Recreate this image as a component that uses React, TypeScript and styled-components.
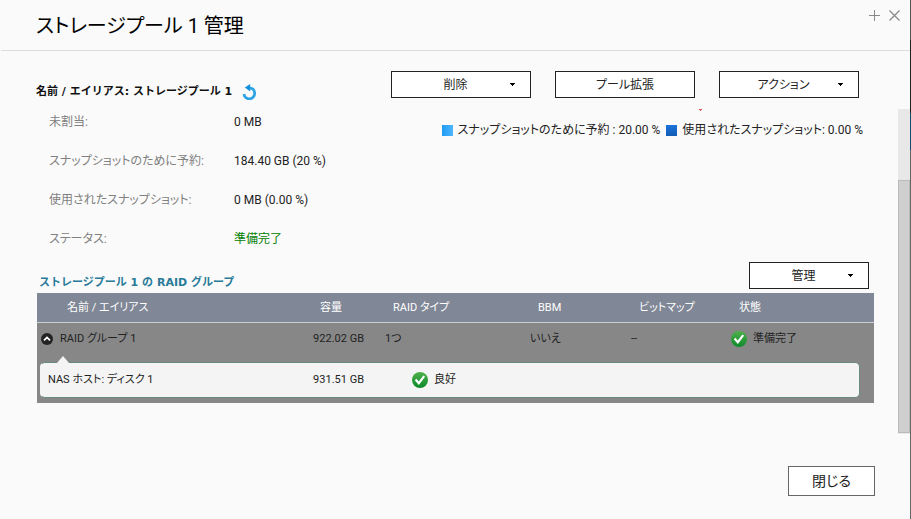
import React from "react";
import styled, { createGlobalStyle } from "styled-components";

const GlobalStyle = createGlobalStyle`
  * { box-sizing: border-box; }
  body {
    margin: 0;
    background: #fafafa;
    color: #222;
    font: 12px/16px Roboto, "Noto Sans CJK JP", sans-serif;
    font-feature-settings: "palt";
  }
  button { font: inherit; font-feature-settings: inherit; color: inherit; cursor: pointer; }
`;

const Screen = styled.div`
  display: flex;
  min-height: 100vh;
`;

const Dialog = styled.main`
  flex: 1;
  min-width: 0;
  display: flex;
  flex-direction: column;
`;

const Backdrop = styled.div`
  width: 1px;
  background: linear-gradient(#555 0 40px, #222 40px 113px, #0f5068 113px 150px, #666 150px);
`;

const TitleBar = styled.header`
  display: flex;
  justify-content: space-between;
  align-items: flex-start;
  height: 51px;
  margin-left: 1px;
  padding: 11px 9px 0 35px;
  border-bottom: 1px solid #ddd;
`;

const Title = styled.h1`
  margin: 0;
  font-size: 20px;
  line-height: 30px;
  font-weight: 400;
  color: #000;
`;

const WindowButtons = styled.div`
  display: flex;
  gap: 8px;
  margin-top: -1px;
`;

const IconButton = styled.button`
  display: flex;
  padding: 0;
  border: 0;
  background: none;
`;

const Toolbar = styled.div`
  display: flex;
  justify-content: space-between;
  align-items: flex-start;
  height: 58px;
  padding: 20px 51px 0 36px;
`;

const PoolName = styled.h2`
  display: flex;
  align-items: center;
  gap: 10px;
  margin: 0;
  padding-top: 13px;
  font: 700 11px/16px "DejaVu Sans", "Noto Sans CJK JP", sans-serif;
  color: #111;
`;

const Actions = styled.div`
  display: flex;
  gap: 24px;
`;

const Button = styled.button<{ $width: number }>`
  display: flex;
  align-items: center;
  gap: 4px;
  width: ${(p) => p.$width}px;
  height: 27px;
  padding: 0 14px;
  border: 1px solid #222;
  background: #fff;

  span { flex: 1; }
`;

const Viewport = styled.div`
  display: flex;
  justify-content: space-between;
`;

const Content = styled.div`
  flex: 1;
  min-width: 0;
  padding: 0 24px 31px 37px;
`;

const Scrollbar = styled.div`
  display: flex;
  flex-direction: column;
  width: 12px;
  padding: 71px 0 1px;
  background: #e8e8e8;
`;

const Thumb = styled.div`
  flex: 1;
  border: 1px solid #bbb;
  background: #cfcfcf;
`;

const Overview = styled.section`
  display: flex;
  justify-content: space-between;
  height: 153px;
  padding: 0 11px 0 12px;
`;

const Facts = styled.dl`
  display: grid;
  grid-template-columns: 185px auto;
  grid-auto-rows: 16px;
  row-gap: 23px;
  align-content: start;
  margin: 0;
  padding-top: 5px;
`;

const FactName = styled.dt`
  color: #808080;
`;

const FactValue = styled.dd<{ $good?: boolean }>`
  margin: 0;
  color: ${(p) => (p.$good ? "#008000" : "#222")};
`;

const ChartArea = styled.div`
  display: flex;
  flex-direction: column;
  align-items: flex-end;
`;

const Legend = styled.ul`
  display: flex;
  gap: 6px;
  margin: 11px 0 0;
  padding: 0;
  list-style: none;
`;

const LegendItem = styled.li<{ $from: string; $to: string; $angle: number }>`
  display: flex;
  align-items: center;
  gap: 5px;

  &::before {
    content: "";
    width: 11px;
    height: 11px;
    background: linear-gradient(${(p) => p.$angle}deg, ${(p) => p.$from}, ${(p) => p.$to});
  }
`;

const GroupBar = styled.div`
  display: flex;
  justify-content: space-between;
  align-items: flex-start;
  height: 31px;
  padding: 0 5px 0 2px;
`;

const GroupTitle = styled.h3`
  margin: 0;
  padding-top: 13px;
  font: 700 11px/16px "DejaVu Sans", "Noto Sans CJK JP", sans-serif;
  color: #287a98;
`;

const Table = styled.table`
  width: 100%;
  table-layout: fixed;
  border-collapse: separate;
  border-spacing: 0;
  background: #878787;
  font-size: 11px;
  line-height: 16px;
`;

const Column = styled.col<{ $width?: number }>`
  width: ${(p) => (p.$width ? `${p.$width}px` : "auto")};
`;

const HeadCell = styled.th<{ $indent?: number }>`
  height: 30px;
  padding: 0 0 0 ${(p) => p.$indent ?? 8}px;
  border-bottom: 1px solid #ccced2;
  background: #808796;
  color: #fff;
  font-weight: 400;
  text-align: left;
`;

const Cell = styled.td`
  height: 32px;
  padding: 0;
`;

const AmountCell = styled(Cell)`
  padding-right: 21px;
  text-align: right;
`;

const Inline = styled.div<{ $gap: number; $indent?: number }>`
  display: flex;
  align-items: center;
  gap: ${(p) => p.$gap}px;
  padding-left: ${(p) => p.$indent ?? 0}px;
`;

const PanelCell = styled.td`
  padding: 7px 14px 5px 3px;
`;

const Panel = styled.div`
  position: relative;
  border: 1px solid #688a80;
  border-left-color: #f4f4f4;
  border-radius: 5px;
  background: #f4f4f4;

  &::before {
    content: "";
    position: absolute;
    top: -7px;
    left: 16px;
    border: solid transparent;
    border-width: 0 6px 7px;
    border-bottom-color: #f4f4f4;
  }
`;

const DiskTable = styled.table`
  width: 100%;
  table-layout: fixed;
  border-collapse: collapse;
`;

const DiskCell = styled.td<{ $indent?: number; $end?: boolean }>`
  height: 34px;
  padding: 0 ${(p) => (p.$end ? 8 : 0)}px 0 ${(p) => p.$indent ?? 0}px;
  text-align: ${(p) => (p.$end ? "right" : "left")};
`;

const Footer = styled.footer`
  display: flex;
  justify-content: flex-end;
  padding: 32px 35px 22px;
`;

const CloseButton = styled.button`
  width: 87px;
  height: 30px;
  padding: 0;
  border: 1px solid #666;
  background: #fff;
  font-size: 14px;
`;

const Caret = () => (
  <svg width="7" height="4" viewBox="0 0 7 4" aria-hidden="true">
    <path d="M1 0h5v1h-1v1h-1v1h-1v-1h-1v-1h-1z" fill="#000" />
  </svg>
);

const Check = () => (
  <svg width="16" height="16" viewBox="0 0 16 16" aria-hidden="true">
    <defs>
      <linearGradient id="ok" x1="0" y1="0" x2="0" y2="1">
        <stop offset="0" stopColor="#4fb04a" />
        <stop offset="1" stopColor="#0c8a2c" />
      </linearGradient>
    </defs>
    <circle cx="8" cy="8" r="8" fill="url(#ok)" />
    <path d="M3.6 7.6 6.8 11.2 12.2 4.2" fill="none" stroke="#fff" strokeWidth="2.2" />
  </svg>
);

const MenuButton = ({ label, width = 140 }: { label: string; width?: number }) => (
  <Button type="button" $width={width} aria-haspopup="menu">
    <span>{label}</span>
    <Caret />
  </Button>
);

const facts = [
  { name: "未割当:", value: "0 MB" },
  { name: "スナップショットのために予約:", value: "184.40 GB (20 %)" },
  { name: "使用されたスナップショット:", value: "0 MB (0.00 %)" },
  { name: "ステータス:", value: "準備完了", good: true },
];

export default function App() {
  return (
    <Screen>
      <GlobalStyle />
      <Dialog>
        <TitleBar>
          <Title>ストレージプール 1 管理</Title>
          <WindowButtons>
            <IconButton type="button" aria-label="最大化">
              <svg width="12" height="12" viewBox="0 0 12 12" stroke="#888">
                <path d="M0 5.5h11M5.5 0v11" />
              </svg>
            </IconButton>
            <IconButton type="button" aria-label="ウィンドウを閉じる">
              <svg width="12" height="12" viewBox="0 0 12 12" stroke="#888" strokeWidth="1.2">
                <path d="M.5.5l10 10M10.5.5l-10 10" />
              </svg>
            </IconButton>
          </WindowButtons>
        </TitleBar>

        <Toolbar>
          <PoolName>
            名前 / エイリアス: ストレージプール 1
            <IconButton type="button" aria-label="更新">
              <svg width="15" height="16" viewBox="0 0 15 16">
                <path d="M7 4.2C10.5 3.4 12.7 6 12.6 9A5.3 5.3 0 0 1 2 10" fill="none" stroke="#2ea3e6" strokeWidth="2.8" />
                <path d="M2.8 3.6 8.2 0v7.4z" fill="#1590dc" />
              </svg>
            </IconButton>
          </PoolName>
          <Actions>
            <MenuButton label="削除" />
            <Button type="button" $width={140}>
              <span>プール拡張</span>
            </Button>
            <MenuButton label="アクション" />
          </Actions>
        </Toolbar>

        <Viewport>
          <Content>
            <Overview>
              <Facts>
                {facts.map((fact) => (
                  <React.Fragment key={fact.name}>
                    <FactName>{fact.name}</FactName>
                    <FactValue $good={fact.good}>{fact.value}</FactValue>
                  </React.Fragment>
                ))}
              </Facts>
              <ChartArea>
                <svg width="416" height="2" viewBox="0 0 416 2" aria-hidden="true">
                  <path d="M252 0h3v1h-1v1h-1V1h-1z" fill="#d9534f" />
                </svg>
                <Legend>
                  <LegendItem $from="#1f9bf5" $to="#4db5fb" $angle={90}>
                    スナップショットのために予約 : 20.00 %
                  </LegendItem>
                  <LegendItem $from="#1b73dc" $to="#125cb4" $angle={180}>
                    使用されたスナップショット: 0.00 %
                  </LegendItem>
                </Legend>
              </ChartArea>
            </Overview>

            <GroupBar>
              <GroupTitle>ストレージプール 1 の RAID グループ</GroupTitle>
              <MenuButton label="管理" width={120} />
            </GroupBar>

            <Table>
              <colgroup>
                <Column />
                <Column $width={73} />
                <Column $width={145} />
                <Column $width={101} />
                <Column $width={100} />
                <Column $width={143} />
              </colgroup>
              <thead>
                <tr>
                  <HeadCell $indent={30}>名前 / エイリアス</HeadCell>
                  <HeadCell>容量</HeadCell>
                  <HeadCell>RAID タイプ</HeadCell>
                  <HeadCell>BBM</HeadCell>
                  <HeadCell>ビットマップ</HeadCell>
                  <HeadCell>状態</HeadCell>
                </tr>
              </thead>
              <tbody>
                <tr>
                  <Cell>
                    <Inline $gap={7} $indent={4}>
                      <IconButton type="button" aria-label="折りたたむ" aria-expanded="true">
                        <svg width="12" height="12" viewBox="0 0 12 12">
                          <circle cx="6" cy="6" r="6" fill="#222" />
                          <path d="M3 7.4 6 4.4l3 3" fill="none" stroke="#fff" strokeWidth="1.8" />
                        </svg>
                      </IconButton>
                      RAID グループ 1
                    </Inline>
                  </Cell>
                  <AmountCell>922.02 GB</AmountCell>
                  <Cell>1つ</Cell>
                  <Cell>いいえ</Cell>
                  <Cell>--</Cell>
                  <Cell>
                    <Inline $gap={6}>
                      <Check />
                      準備完了
                    </Inline>
                  </Cell>
                </tr>
                <tr>
                  <PanelCell colSpan={6}>
                    <Panel>
                      <DiskTable>
                        <colgroup>
                          <Column />
                          <Column $width={60} />
                          <Column $width={487} />
                        </colgroup>
                        <tbody>
                          <tr>
                            <DiskCell $indent={7}>NAS ホスト: ディスク 1</DiskCell>
                            <DiskCell $end>931.51 GB</DiskCell>
                            <DiskCell $indent={40}>
                              <Inline $gap={6}>
                                <Check />
                                良好
                              </Inline>
                            </DiskCell>
                          </tr>
                        </tbody>
                      </DiskTable>
                    </Panel>
                  </PanelCell>
                </tr>
              </tbody>
            </Table>
          </Content>
          <Scrollbar aria-hidden="true">
            <Thumb />
          </Scrollbar>
        </Viewport>

        <Footer>
          <CloseButton type="button">閉じる</CloseButton>
        </Footer>
      </Dialog>
      <Backdrop />
    </Screen>
  );
}
